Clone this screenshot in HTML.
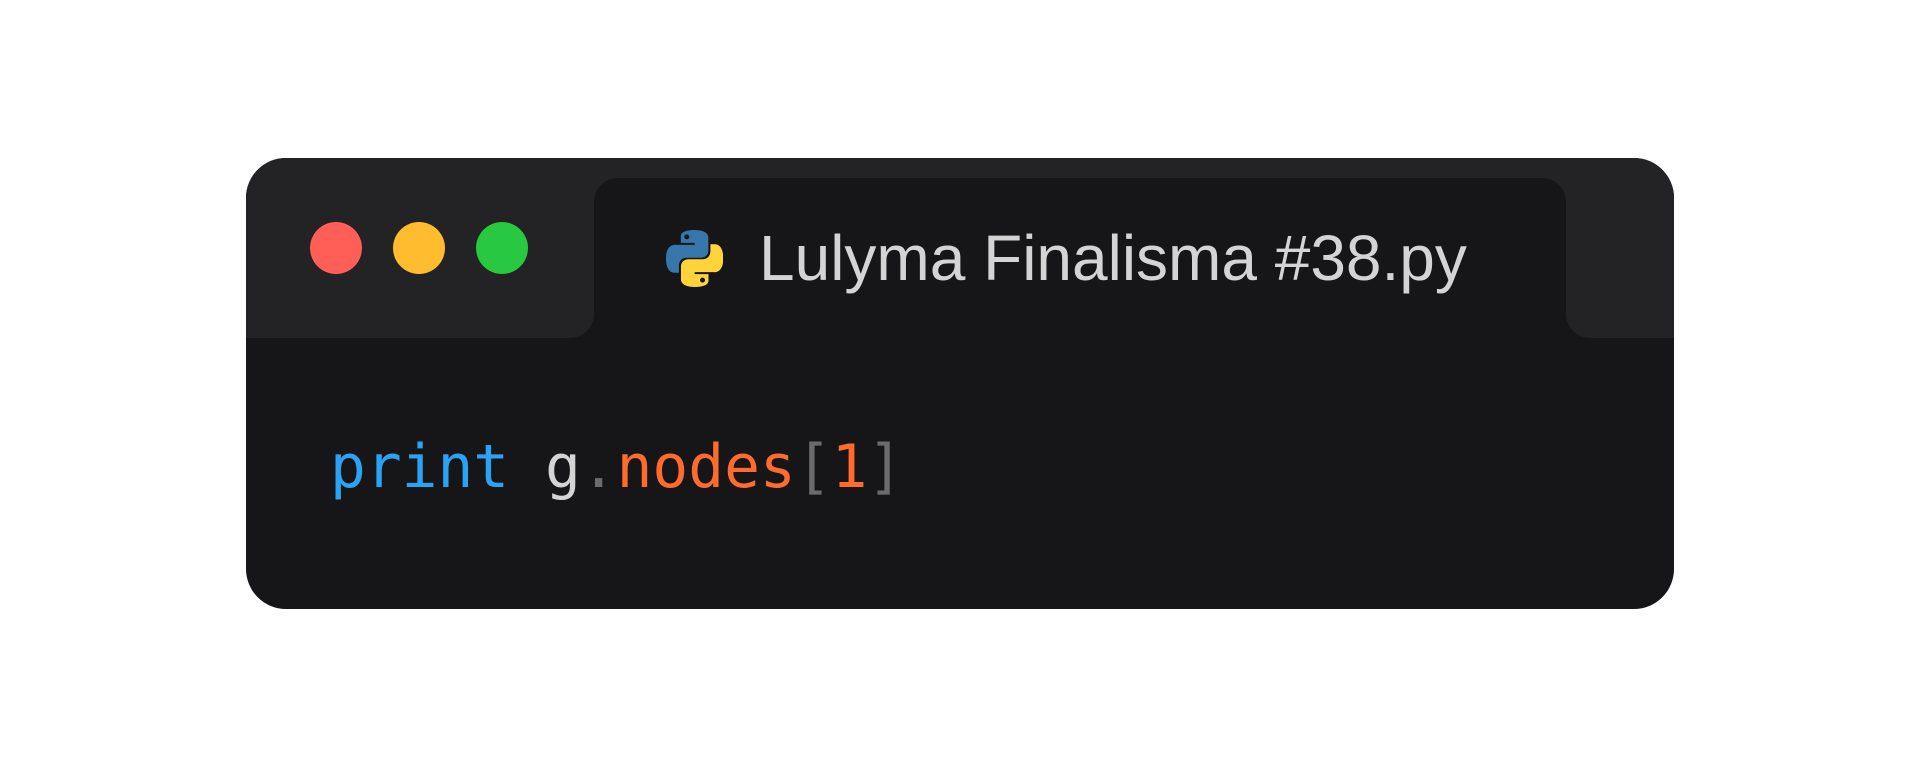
<!DOCTYPE html>
<html><head><meta charset="utf-8"><style>
html,body{margin:0;padding:0;background:#fff;width:1920px;height:768px;overflow:hidden}
.win{position:absolute;left:246px;top:158px;width:1428px;height:451px;border-radius:40px;background:#161618;overflow:hidden}
.hl{position:absolute;left:0;top:0;width:348px;height:180px;background:#232325;border-bottom-right-radius:24px}
.hr{position:absolute;left:1320px;top:0;width:108px;height:180px;background:#232325;border-bottom-left-radius:24px}
.htop{position:absolute;left:0;top:0;width:1428px;height:60px;background:#232325}
.tab{position:absolute;left:348px;top:20px;width:972px;height:200px;background:#161618;border-radius:24px 24px 0 0}
.dot{position:absolute;top:64px;width:52px;height:52px;border-radius:50%}
.title{position:absolute;left:513px;top:68px;font:64px "Liberation Sans",sans-serif;color:#d4d4d4;line-height:1;white-space:nowrap}
.code{position:absolute;left:84px;top:280px;font:59.5px "DejaVu Sans Mono","Liberation Mono",monospace;line-height:1;white-space:pre;letter-spacing:0}
</style></head><body>
<div class="win">
<div class="htop"></div>
<div class="hl"></div><div class="hr"></div>
<div class="tab"></div>
<div class="dot" style="left:64px;background:#ff5f57"></div>
<div class="dot" style="left:147px;background:#febc2e"></div>
<div class="dot" style="left:230px;background:#28c840"></div>
<svg style="position:absolute;left:420px;top:72px" width="57" height="57" viewBox="0 0 110 110">
<path fill="#3776ab" d="M54.9 0C26.8 0 28.6 12.2 28.6 12.2l0 12.6h26.8v3.8H17.9S0 26.5 0 55c0 28.4 15.6 27.4 15.6 27.4h9.3V69.2s-.5-15.6 15.4-15.6h26.5s14.9.2 14.9-14.4V15.1S83.9 0 54.9 0zM40.1 8.5c2.7 0 4.8 2.2 4.8 4.8s-2.2 4.8-4.8 4.8-4.8-2.2-4.8-4.8 2.2-4.8 4.8-4.8z"/>
<path fill="#ffd43b" d="M55.7 110c28.1 0 26.3-12.2 26.3-12.2l0-12.6H55.2v-3.8h37.5S110.6 83.5 110.6 55c0-28.4-15.6-27.4-15.6-27.4h-9.3v13.2s.5 15.6-15.4 15.6H43.8s-14.9-.2-14.9 14.4v24.1S26.7 110 55.7 110zm14.8-8.5c-2.7 0-4.8-2.200-4.8-4.8s2.2-4.8 4.8-4.8 4.8 2.2 4.8 4.8-2.2 4.8-4.8 4.8z"/>
</svg>
<div class="title">Lulyma Finalisma #38.py</div>
<div class="code"><span style="color:#2aa3f5">print</span> <span style="color:#d4d4d4">g</span><span style="color:#6b6b6b">.</span><span style="color:#ff6b2d">nodes</span><span style="color:#6b6b6b">[</span><span style="color:#ff6b2d">1</span><span style="color:#6b6b6b">]</span></div>
</div>
</body></html>
